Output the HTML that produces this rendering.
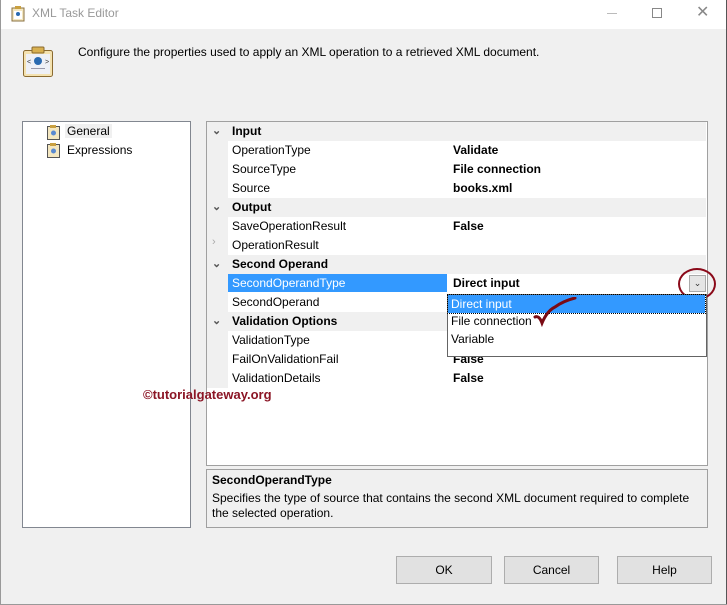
<!DOCTYPE html>
<html><head><style>
*{margin:0;padding:0;box-sizing:border-box}
body{width:727px;height:605px;background:#f0f0f0;font-family:"Liberation Sans",sans-serif;font-size:12px;color:#000;position:relative;overflow:hidden}
.a{position:absolute}
.row{position:absolute;left:207px;width:499px;height:19px}
.nm{position:absolute;left:21px;width:219px;height:18px;background:#fff;padding-left:4px;line-height:18px;white-space:nowrap}
.vl{position:absolute;left:242px;right:0;height:18px;background:#fff;padding-left:4px;line-height:18px;font-weight:bold}
.cat{background:#f0f0f0;font-weight:bold;line-height:19px;padding-left:25px}
.chev{position:absolute;left:5px;top:0;color:#555;font-size:11px}
.btn{position:absolute;top:556px;height:28px;background:#e1e1e1;border:1px solid #adadad;text-align:center;line-height:26px}
</style></head><body>
<div class="a" style="left:0;top:0;width:727px;height:29px;background:#fff"></div>
<div class="a" style="left:0;top:0;width:1px;height:605px;background:#999"></div>
<div class="a" style="left:726px;top:0;width:1px;height:605px;background:#555"></div>
<div class="a" style="left:0;top:604px;width:727px;height:1px;background:#999"></div>
<svg class="a" style="left:11px;top:6px" width="14" height="16"><rect x="1" y="2" width="12" height="13" fill="#f4e7c0" stroke="#8a7040"/><rect x="3" y="5" width="8" height="8" fill="#fff"/><rect x="4" y="0" width="6" height="3" fill="#c9a040"/><circle cx="7" cy="8" r="2" fill="#2a6ab0"/></svg>
<div class="a" style="left:32px;top:6px;color:#999;font-size:12px">XML Task Editor</div>
<div class="a" style="left:607px;top:13px;width:10px;height:1px;background:#bbb"></div>
<div class="a" style="left:652px;top:8px;width:10px;height:10px;border:1px solid #888"></div>
<div class="a" style="left:696px;top:2px;font-size:16px;color:#888">✕</div>
<svg class="a" style="left:22px;top:46px" width="32" height="32"><rect x="1.5" y="4.5" width="29" height="26" rx="2" fill="#f4e2b0" stroke="#8a6a30"/><rect x="4" y="8" width="24" height="20" fill="#eef0f6"/><rect x="10" y="1" width="12" height="6" rx="1" fill="#d8b050" stroke="#8a6a30"/><circle cx="16" cy="15" r="4" fill="#2a6ab0"/><text x="5" y="18" font-size="7" fill="#333">&lt;</text><text x="23" y="18" font-size="7" fill="#333">&gt;</text><rect x="9" y="22" width="14" height="1" fill="#99a"/></svg>
<div class="a" style="left:78px;top:45px;font-size:12px">Configure the properties used to apply an XML operation to a retrieved XML document.</div>
<div class="a" style="left:22px;top:121px;width:169px;height:407px;background:#fff;border:1px solid #828790"></div>
<svg class="a" style="left:46px;top:124px" width="16" height="16"><rect x="1.5" y="2.5" width="12" height="13" fill="#f4e7c0" stroke="#555"/><rect x="4" y="1" width="6" height="3" fill="#c9a040"/><circle cx="7.5" cy="9" r="2.5" fill="#5a8ad0"/></svg>
<svg class="a" style="left:46px;top:142px" width="16" height="16"><rect x="1.5" y="2.5" width="12" height="13" fill="#f4e7c0" stroke="#555"/><rect x="4" y="1" width="6" height="3" fill="#c9a040"/><circle cx="7.5" cy="9" r="2.5" fill="#5a8ad0"/></svg>
<div class="a" style="left:65px;top:124px;padding:0 2px;background:#f0f0f0">General</div>
<div class="a" style="left:67px;top:143px">Expressions</div>
<div class="a" style="left:206px;top:121px;width:502px;height:345px;background:#fff;border:1px solid #a0a0a0"></div>
<div class="a" style="left:207px;top:122px;width:21px;height:266px;background:#f0f0f0"></div>

<div class="row cat" style="top:122px"><span class="chev">⌄</span>Input</div>
<div class="row" style="top:141px"><div class="nm">OperationType</div><div class="vl">Validate</div></div>
<div class="row" style="top:160px"><div class="nm">SourceType</div><div class="vl">File connection</div></div>
<div class="row" style="top:179px"><div class="nm">Source</div><div class="vl">books.xml</div></div>
<div class="row cat" style="top:198px"><span class="chev">⌄</span>Output</div>
<div class="row" style="top:217px"><div class="nm">SaveOperationResult</div><div class="vl">False</div></div>
<div class="row" style="top:236px"><span class="chev" style="color:#aaa">›</span><div class="nm">OperationResult</div><div class="vl"></div></div>
<div class="row cat" style="top:255px"><span class="chev">⌄</span>Second Operand</div>
<div class="row" style="top:274px"><div class="nm" style="background:#3399ff;color:#fff">SecondOperandType</div><div class="vl">Direct input</div></div>
<div class="row" style="top:293px"><div class="nm">SecondOperand</div><div class="vl"></div></div>
<div class="row cat" style="top:312px"><span class="chev">⌄</span>Validation Options</div>
<div class="row" style="top:331px"><div class="nm">ValidationType</div><div class="vl"></div></div>
<div class="row" style="top:350px"><div class="nm">FailOnValidationFail</div><div class="vl">False</div></div>
<div class="row" style="top:369px"><div class="nm">ValidationDetails</div><div class="vl">False</div></div>

<div class="a" style="left:689px;top:275px;width:17px;height:17px;background:#e5e5e5;border:1px solid #aaa;text-align:center;font-size:9px;line-height:15px;color:#333">⌄</div>
<div class="a" style="left:678px;top:268px;width:38px;height:32px;border:2px solid #8b0a1a;border-radius:50%"></div>
<div class="a" style="left:447px;top:294px;width:260px;height:63px;background:#fff;border:1px solid #646464"></div>
<div class="a" style="left:448px;top:295px;width:257px;height:18px;background:#3399ff;color:#fff;padding-left:3px;line-height:18px;outline:1px dotted #000">Direct input</div>
<div class="a" style="left:451px;top:314px">File connection</div>
<div class="a" style="left:451px;top:332px">Variable</div>
<svg class="a" style="left:533px;top:297px" width="45" height="32"><path d="M2 20 Q6 18 9 26 Q14 14 22 10 Q30 4 42 1" fill="none" stroke="#7a0a14" stroke-width="3" stroke-linecap="round"/></svg>

<div class="a" style="left:143px;top:387px;color:#8b1525;font-weight:bold;font-size:13px">©tutorialgateway.org</div>

<div class="a" style="left:206px;top:469px;width:502px;height:59px;border:1px solid #a0a0a0;background:#f0f0f0"></div>
<div class="a" style="left:212px;top:473px;font-weight:bold">SecondOperandType</div>
<div class="a" style="left:212px;top:491px;line-height:15px;width:490px">Specifies the type of source that contains the second XML document required to complete the selected operation.</div>

<div class="btn" style="left:396px;width:96px">OK</div>
<div class="btn" style="left:504px;width:95px">Cancel</div>
<div class="btn" style="left:617px;width:95px">Help</div>
</body></html>
